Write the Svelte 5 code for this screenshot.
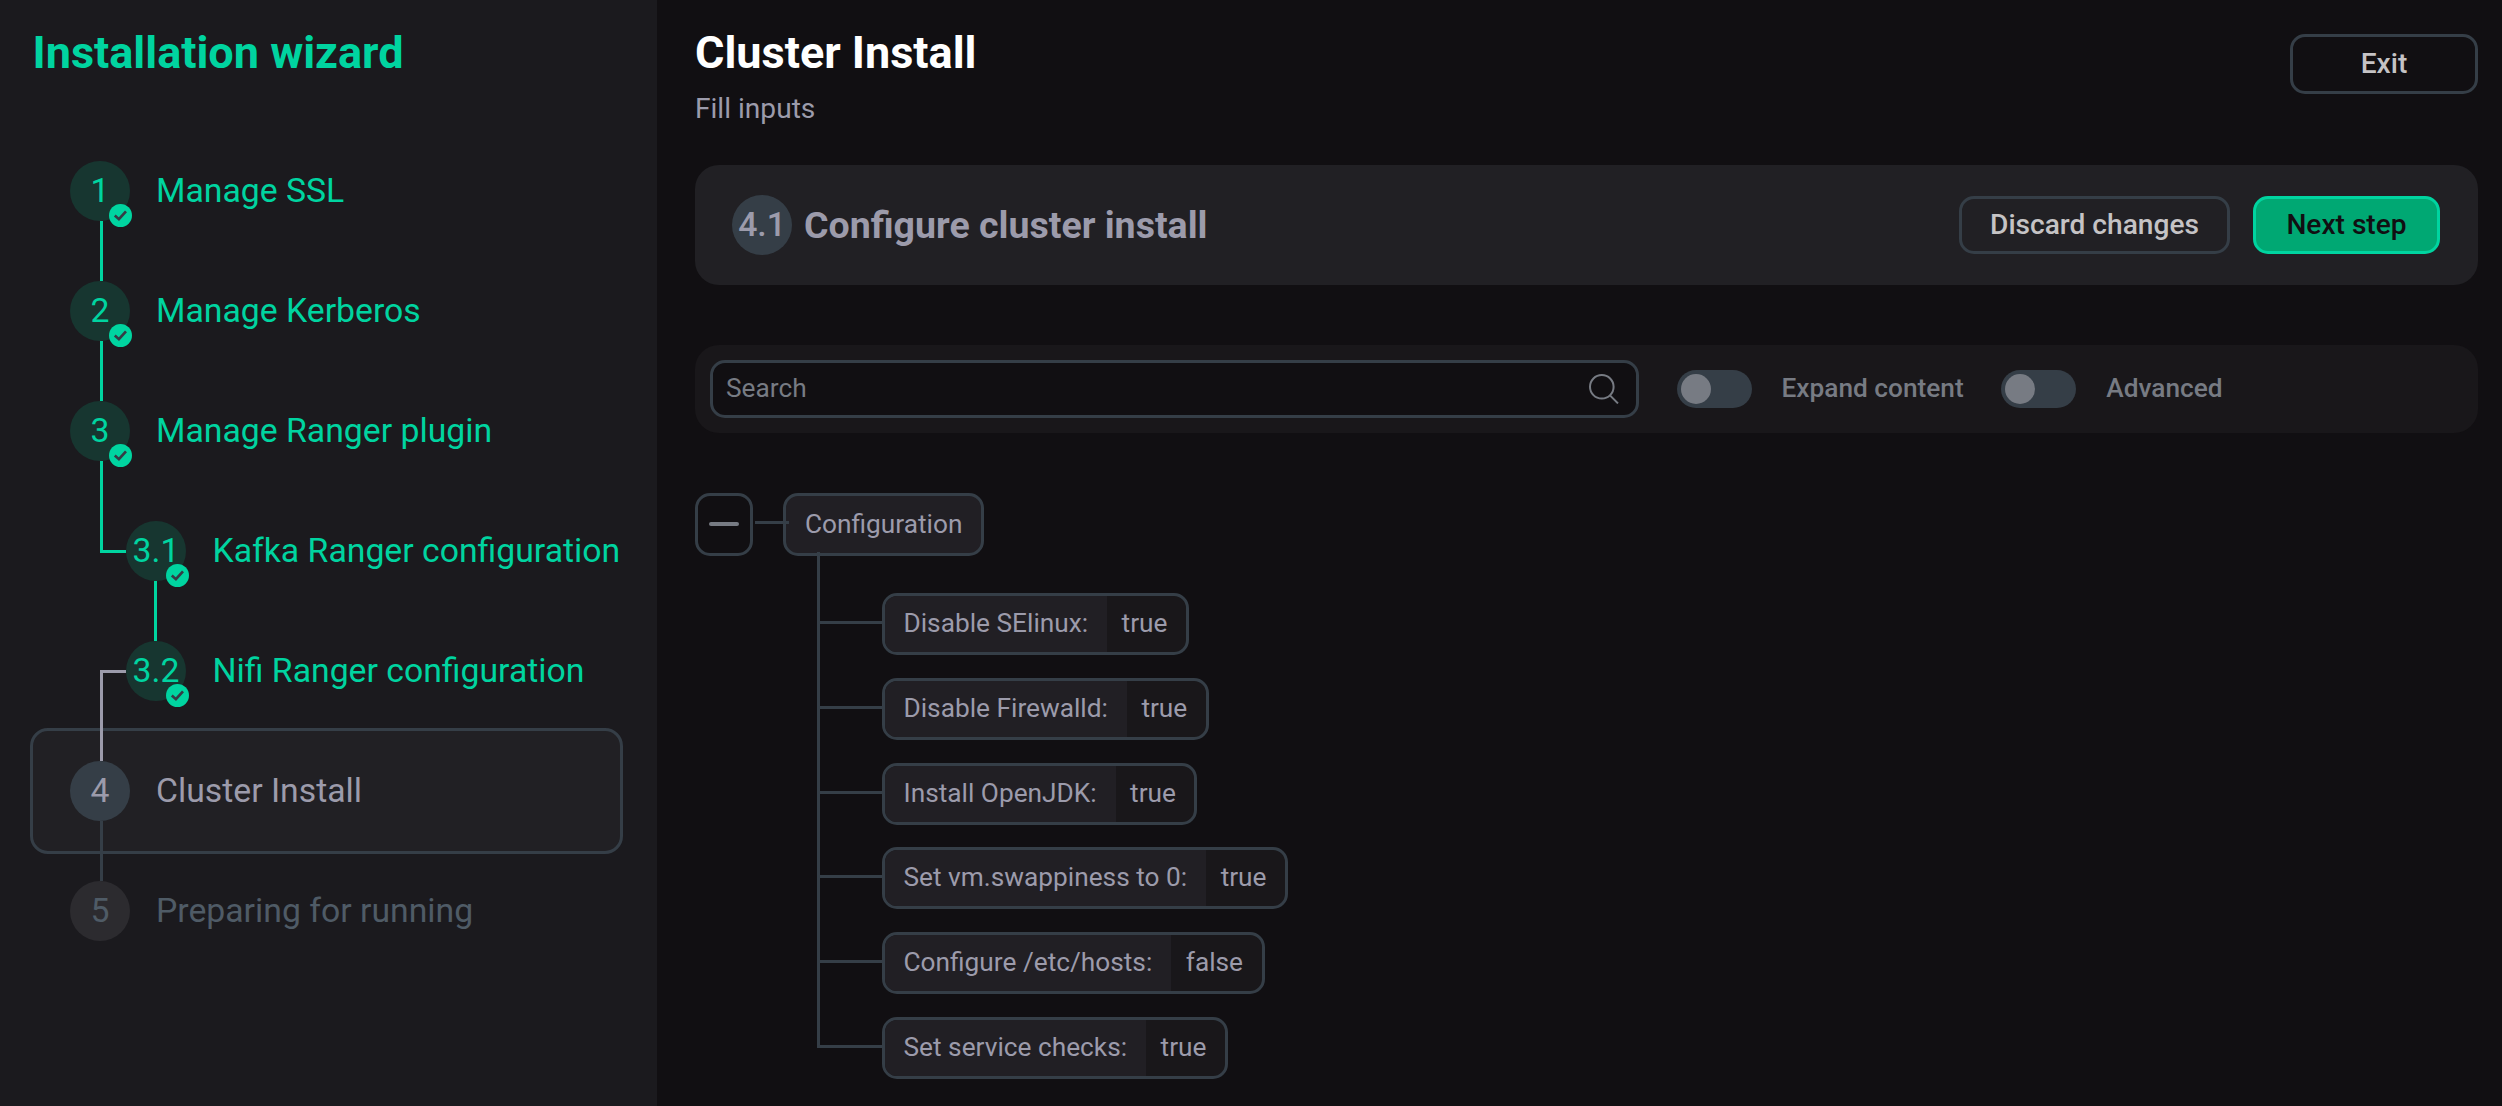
<script lang="ts">
    type Step = {
        index: string;
        label: string;
        state: "done" | "active" | "pending";
        nested?: boolean;
        link?: "down" | "branch" | "merge" | "muted" | "sub";
    };

    const steps: Step[] = [
        { index: "1", label: "Manage SSL", state: "done", link: "down" },
        { index: "2", label: "Manage Kerberos", state: "done", link: "down" },
        { index: "3", label: "Manage Ranger plugin", state: "done", link: "branch" },
        { index: "3.1", label: "Kafka Ranger configuration", state: "done", nested: true, link: "sub" },
        { index: "3.2", label: "Nifi Ranger configuration", state: "done", nested: true, link: "merge" },
        { index: "4", label: "Cluster Install", state: "active", link: "muted" },
        { index: "5", label: "Preparing for running", state: "pending" },
    ];

    const settings = [
        { name: "Disable SElinux", value: true },
        { name: "Disable Firewalld", value: true },
        { name: "Install OpenJDK", value: true },
        { name: "Set vm.swappiness to 0", value: true },
        { name: "Configure /etc/hosts", value: false },
        { name: "Set service checks", value: true },
    ];

    let search = $state("");
    let open = $state(true);
    let toggles = $state([
        { label: "Expand content", on: false },
        { label: "Advanced", on: false },
    ]);
</script>

<div class="layout">
    <aside class="sidebar">
        <h1>Installation wizard</h1>
        <ol class="steps">
            {#each steps as step}
                <li class="step {step.state}" class:nested={step.nested}>
                    <span class="bullet">
                        {step.index}
                        {#if step.state === "done"}
                            <svg class="badge" viewBox="0 0 23 23">
                                <circle cx="11.5" cy="11.5" r="11.5" fill="#00d4a0" />
                                <path d="M5.8 11.6 L9.9 15.2 L17 7.4" fill="none" stroke="#343b45" stroke-width="2.7" />
                            </svg>
                        {/if}
                    </span>
                    <span class="label">{step.label}</span>
                    {#if step.link}
                        <span class="link {step.link}"></span>
                    {/if}
                </li>
            {/each}
        </ol>
    </aside>

    <main class="content">
        <header class="page-head">
            <div>
                <h2>Cluster Install</h2>
                <p>Fill inputs</p>
            </div>
            <button class="btn exit">Exit</button>
        </header>

        <section class="panel">
            <span class="bullet">4.1</span>
            <h3>Configure cluster install</h3>
            <button class="btn discard">Discard changes</button>
            <button class="btn primary">Next step</button>
        </section>

        <section class="toolbar">
            <label class="search">
                <input type="text" bind:value={search} placeholder="Search" />
                <svg viewBox="0 0 30 30" width="30" height="30" fill="none" stroke="#777b83" stroke-width="2">
                    <circle cx="12.8" cy="12.8" r="11.8" />
                    <path d="M21 21.4 L29 29.4" />
                </svg>
            </label>
            {#each toggles as toggle}
                <button class="switch" class:on={toggle.on} aria-label={toggle.label} onclick={() => (toggle.on = !toggle.on)}>
                    <span class="knob"></span>
                </button>
                <span class="switch-label">{toggle.label}</span>
            {/each}
        </section>

        <section class="tree">
            <div class="root">
                <button class="collapse" aria-label="Collapse" onclick={() => (open = !open)}>
                    <span class="minus"></span>
                </button>
                <span class="root-line"></span>
                <div class="node">Configuration</div>
            </div>
            {#if open}
                <ul class="children">
                    {#each settings as item}
                        <li>
                            <div class="leaf">
                                <span class="name">{item.name}:</span>
                                <span class="value">{item.value}</span>
                            </div>
                        </li>
                    {/each}
                </ul>
            {/if}
        </section>
    </main>
</div>

<style>
    :global(body) {
        background: #110f12;
    }

    .layout {
        display: flex;
        height: 1106px;
        overflow: hidden;
        background: #110f12;
        color: #9c9bab;
        font-family: Roboto, sans-serif;
        font-size: 26.25px;
    }

    .layout *,
    .layout *::before {
        box-sizing: border-box;
    }

    h1,
    h2,
    h3,
    p,
    ol,
    ul {
        margin: 0;
        padding: 0;
        list-style: none;
    }

    button,
    input {
        font-family: inherit;
    }

    .sidebar {
        width: 657px;
        flex-shrink: 0;
        padding: 26px 30px 0;
        background: #1b1a1e;
    }

    h1 {
        padding-left: 2.5px;
        color: #00d4a0;
        font-size: 45px;
        line-height: 53px;
    }

    .steps {
        margin-top: 52px;
    }

    .step {
        position: relative;
        display: flex;
        align-items: center;
        width: 593px;
        height: 120px;
        padding-left: 40px;
        color: #00d4a0;
        font-size: 33.75px;
        white-space: nowrap;
    }

    .step.nested {
        padding-left: 96px;
    }

    .step.active {
        height: 126px;
        margin: -3px 0;
        padding-left: 37px;
        background: #212024;
        border: 3px solid #353e47;
        border-radius: 18px;
        color: #9c9bab;
    }

    .step.pending {
        color: #4f5b66;
    }

    .bullet {
        position: relative;
        display: flex;
        align-items: center;
        justify-content: center;
        flex-shrink: 0;
        width: 60px;
        height: 60px;
        padding-bottom: 1px;
        border-radius: 50%;
        background: #173630;
        font-size: 33.75px;
    }

    .active .bullet,
    .panel .bullet {
        background: #353e47;
    }

    .panel .bullet {
        font-weight: 500;
    }

    .pending .bullet {
        background: #2c2b2f;
    }

    .badge {
        position: absolute;
        left: 39px;
        top: 43px;
        width: 23px;
        height: 23px;
    }

    .nested .badge {
        left: 39.5px;
    }

    .label {
        margin-left: 26px;
        padding-bottom: 2px;
    }

    .nested .label {
        margin-left: 26.5px;
    }

    /* connector from one bullet to the next */
    .link {
        position: absolute;
        left: 70px;
        top: 90px;
        width: 3px;
        height: 60px;
        background: #00d4a0;
    }

    .link.branch {
        width: 26px;
        height: 92px;
        background: none;
        border-left: 3px solid #00d4a0;
        border-bottom: 3px solid #00d4a0;
    }

    .link.sub {
        left: 124px;
    }

    .link.merge {
        z-index: 1;
        top: 59px;
        width: 26px;
        height: 91px;
        background: none;
        border-left: 3px solid #9c9bab;
        border-top: 3px solid #9c9bab;
    }

    .link.muted {
        left: 67px;
        background: #353e47;
    }

    .content {
        flex: 1;
        padding: 26px 24px 0 38px;
    }

    .page-head {
        display: flex;
        justify-content: space-between;
        align-items: flex-start;
        height: 139px;
    }

    h2 {
        color: #fff;
        font-size: 45px;
        line-height: 53px;
    }

    .page-head p {
        margin-top: 13px;
        font-size: 28.125px;
        line-height: 33px;
    }

    .btn {
        height: 58px;
        padding: 0 0 2px;
        background: none;
        border: 3px solid #353e47;
        border-radius: 15px;
        color: #c5c3c5;
        font-size: 28.125px;
        font-weight: 500;
    }

    .exit {
        width: 188px;
        height: 60px;
        margin-top: 8px;
    }

    .panel {
        display: flex;
        align-items: center;
        height: 120px;
        padding: 0 38px 0 37px;
        background: #212024;
        border-radius: 24px;
    }

    h3 {
        flex: 1;
        margin-left: 12px;
        font-size: 37.5px;
    }

    .discard {
        width: 271px;
    }

    .primary {
        width: 187px;
        margin-left: 23px;
        background: #00a873;
        border-color: #00d4a0;
        color: #110f12;
    }

    .toolbar {
        display: flex;
        align-items: center;
        height: 88px;
        margin-top: 60px;
        padding: 0 15px;
        background: #19171a;
        border-radius: 24px;
        color: #777b83;
        font-weight: 500;
    }

    .search {
        display: flex;
        align-items: center;
        width: 929px;
        height: 58px;
        padding: 0 17px 0 13px;
        background: #110f12;
        border: 3px solid #353e47;
        border-radius: 15px;
    }

    .search input {
        flex: 1;
        padding: 0 0 2px;
        background: none;
        border: none;
        outline: none;
        color: #9c9bab;
        font-size: 26.25px;
    }

    .search input::placeholder {
        color: #777b83;
    }

    .switch {
        width: 75px;
        height: 38px;
        margin-left: 37.5px;
        padding: 0 4px;
        background: #353e47;
        border: none;
        border-radius: 19px;
    }

    .knob {
        display: block;
        width: 30px;
        height: 30px;
        border-radius: 50%;
        background: #777b83;
    }

    .switch.on .knob {
        margin-left: auto;
    }

    .switch-label {
        margin-left: 30px;
        padding-bottom: 2px;
    }

    .tree {
        margin-top: 60px;
    }

    .root {
        display: flex;
        align-items: center;
    }

    .collapse {
        display: flex;
        align-items: center;
        justify-content: center;
        width: 58px;
        height: 63px;
        padding: 0;
        background: none;
        border: 3px solid #353e47;
        border-radius: 15px;
    }

    .minus {
        width: 30px;
        height: 4px;
        margin-bottom: 1px;
        border-radius: 2px;
        background: #777b83;
    }

    .root-line {
        z-index: 1;
        width: 34px;
        height: 3px;
        margin: 0 -6px 4px 2px;
        background: #353e47;
    }

    .node {
        height: 63px;
        padding: 0 19px;
        background: #211f24;
        border: 3px solid #353e47;
        border-radius: 15px;
        line-height: 57px;
    }

    .children {
        position: relative;
        margin: -4px 0 0 122px;
        padding-top: 41px;
    }

    .children li {
        position: relative;
        display: flex;
        height: 84.75px;
        padding-left: 65px;
    }

    /* trunk, cut into one piece per row */
    .children li::before {
        content: "";
        position: absolute;
        left: 0;
        top: -55px;
        width: 65px;
        height: 86px;
        border-left: 3px solid #353e47;
        border-bottom: 3px solid #353e47;
    }

    .children li:first-child::before {
        top: -41px;
        height: 72px;
    }

    .leaf {
        display: flex;
        height: 62px;
        overflow: hidden;
        background: #19171a;
        border: 3px solid #353e47;
        border-radius: 15px;
        line-height: 55px;
        white-space: nowrap;
    }

    .name {
        padding: 0 19px 0 18.5px;
        background: #211f24;
    }

    .value {
        padding: 0 18.5px 0 14.5px;
    }
</style>
